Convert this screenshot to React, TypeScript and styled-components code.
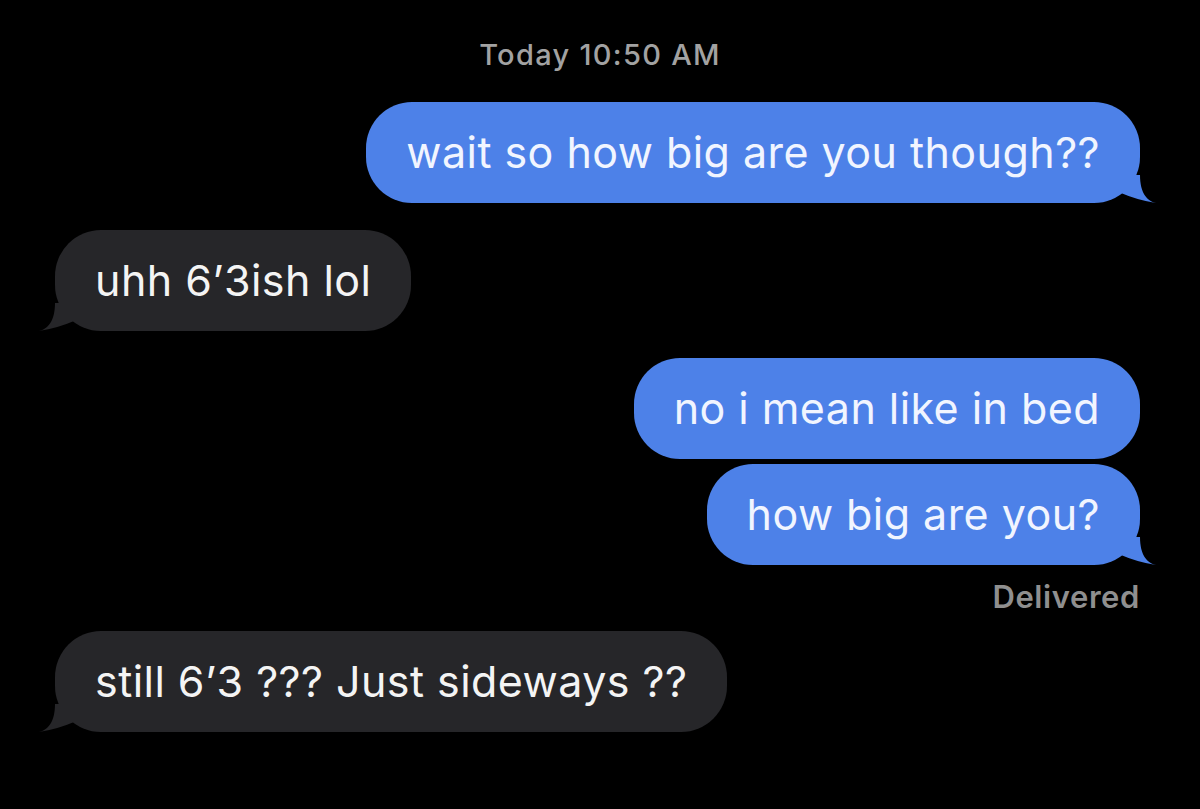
import React from 'react';
import styled, { createGlobalStyle } from 'styled-components';

const BLUE = '#4d81e8';
const GREY = '#262629';

const GlobalStyle = createGlobalStyle`
	html, body {
		margin: 0;
		padding: 0;
		background: #000;
	}
	body {
		font-family: Inter, 'Liberation Sans', Arial, sans-serif;
		-webkit-font-smoothing: antialiased;
	}
`;

const Thread = styled.div`
	width: 1200px;
	height: 809px;
	box-sizing: border-box;
	background: #000;
	padding: 37px 60px 0 55px;
	display: flex;
	flex-direction: column;
	overflow: hidden;
`;

const Timestamp = styled.div`
	text-align: center;
	font-size: 29px;
	line-height: 36px;
	font-weight: 500;
	letter-spacing: 1.3px;
	color: #a2a2a2;
	margin-bottom: 29px;
	padding-left: 5px;
`;

const Row = styled.div<{ $sent?: boolean; $gap: number }>`
	display: flex;
	justify-content: ${(p) => (p.$sent ? 'flex-end' : 'flex-start')};
	margin-top: ${(p) => p.$gap}px;
`;

const Bubble = styled.div<{ $sent?: boolean }>`
	position: relative;
	padding: 24px 40px;
	font-size: 43px;
	line-height: 53px;
	letter-spacing: 0.45px;
	border-radius: 46px;
	white-space: nowrap;
	background: ${(p) => (p.$sent ? BLUE : GREY)};
	color: ${(p) => (p.$sent ? '#f1f5ff' : '#f4f4f4')};
`;

const TailSvg = styled.svg<{ $sent?: boolean }>`
	position: absolute;
	bottom: 0;
	width: 50px;
	height: 40px;
	${(p) =>
		p.$sent
			? 'right: -17px;'
			: 'left: -17px; transform: scaleX(-1);'}
`;

const Status = styled.div`
	text-align: right;
	font-size: 31px;
	line-height: 36px;
	font-weight: 600;
	letter-spacing: 0.6px;
	color: #8f8f8f;
	margin-top: 14px;
	margin-bottom: 2px;
`;

const Tail = ({ sent }: { sent?: boolean }) => (
	<TailSvg $sent={sent} viewBox="0 0 50 40">
		<path
			d="M14 30 Q30 37 49 40 C40 38 33 30 33 12 L14 12 Z"
			fill={sent ? BLUE : GREY}
		/>
	</TailSvg>
);

interface Message {
	text: string;
	sent?: boolean;
	tail?: boolean;
	gap: number;
}

const messages: Message[] = [
	{ text: 'wait so how big are you though??', sent: true, tail: true, gap: 0 },
	{ text: 'uhh 6\u20193ish lol', tail: true, gap: 27 },
	{ text: 'no i mean like in bed', sent: true, gap: 27 },
	{ text: 'how big are you?', sent: true, tail: true, gap: 5 },
];

const App = () => {
	return (
		<>
			<GlobalStyle />
			<Thread>
				<Timestamp>Today 10:50 AM</Timestamp>
				{messages.map((m, key) => (
					<Row $sent={m.sent} $gap={m.gap} key={`msg_${key}`}>
						<Bubble $sent={m.sent}>
							{m.tail && <Tail sent={m.sent} />}
							{m.text}
						</Bubble>
					</Row>
				))}
				<Status>Delivered</Status>
				<Row $gap={14}>
					<Bubble>
						<Tail />
						still 6{'\u2019'}3 ??? Just sideways ??
					</Bubble>
				</Row>
			</Thread>
		</>
	);
};

export default App;
